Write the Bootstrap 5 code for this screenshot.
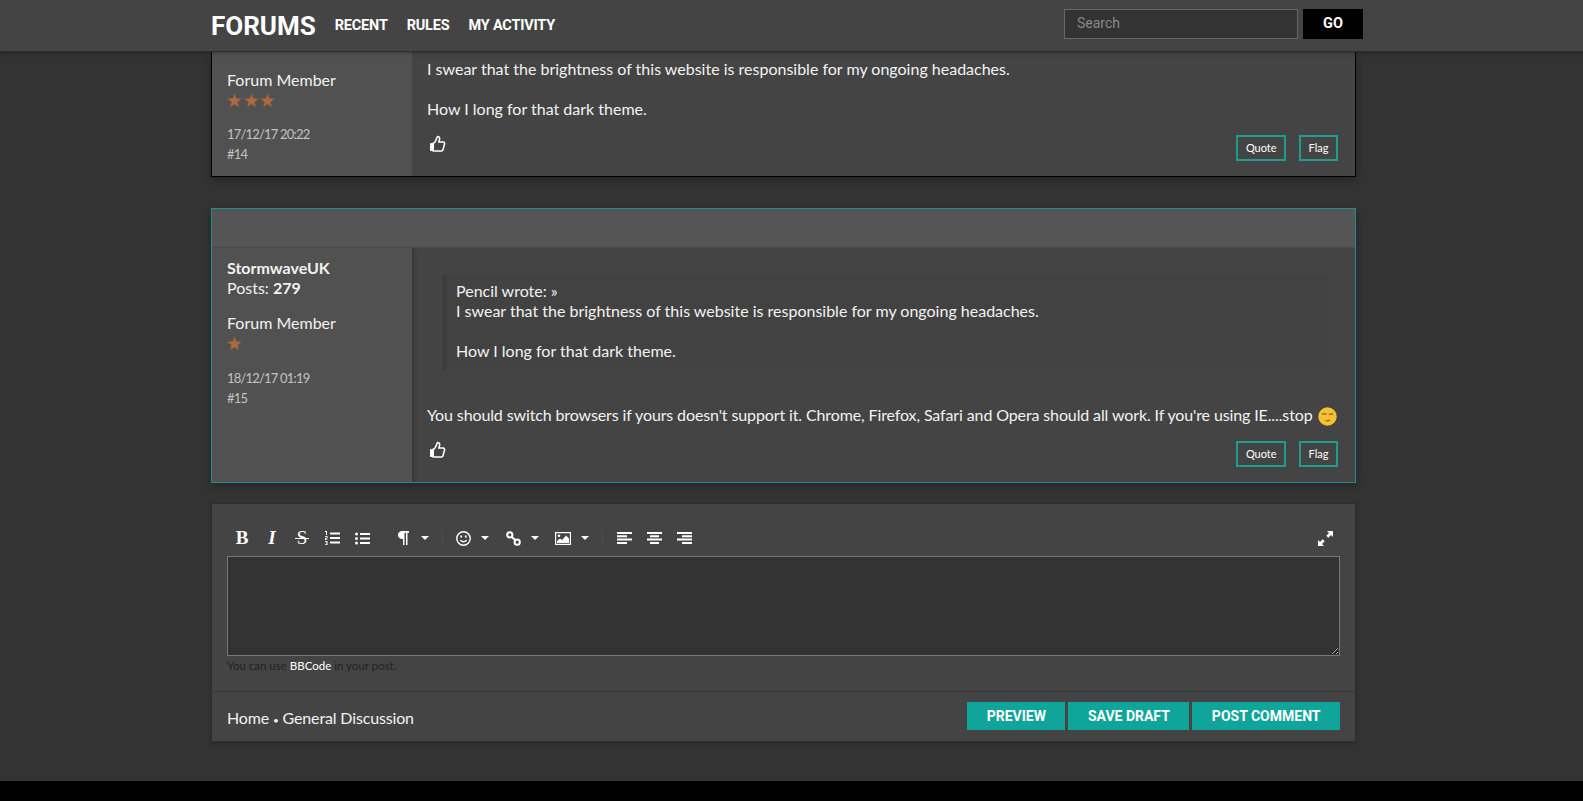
<!DOCTYPE html>
<html lang="en">
<head>
  <meta charset="UTF-8" />
  <meta name="viewport" content="width=device-width, initial-scale=1.0"/>
  <title>Forums</title>
  <link href="https://cdn.jsdelivr.net/npm/bootstrap@5.3.0/dist/css/bootstrap.min.css" rel="stylesheet"/>
  <style>
    body {
      background-color: #333;
      color: #f2f2f2;
      font-family: "Lato", "Liberation Sans", sans-serif;
      font-size: 16px;
      line-height: 20px;
      height: 100vh;
      overflow: hidden;
    }
    a { color: inherit; text-decoration: none; }
    .top-bar {
      background-color: #444;
      border-bottom: 1px solid #2b2b2b;
      box-shadow: 0 1px 4px rgba(0,0,0,.3);
      height: 52px;
      padding: 0 220px 0 211px;
      flex: none;
      position: relative;
      z-index: 5;
      font-family: "Roboto", sans-serif;
    }
    .top-brand { color: #fff; font-size: 26px; font-weight: 700; margin-right: 19px; }
    .top-link { color: #fff; font-size: 14.5px; font-weight: 700; margin: 1px 19px 0 0; letter-spacing: -.2px; }
    .top-form { align-self: flex-start; margin-top: 9px; }
    .top-search {
      background-color: #333;
      border: 1px solid #666;
      border-radius: 0;
      color: #eee;
      width: 234px;
      height: 30px;
      font-size: 14px;
      padding: 0 12px 3px;
      font-family: "Roboto", sans-serif;
    }
    .top-search::placeholder { color: #888; }
    .top-go { background: #000; color: #fff; border: 0; border-radius: 0; width: 60px; height: 30px; font-weight: 700; font-size: 14.5px; margin-left: 5px; padding: 0; }
    .page-col { padding: 0 227px 0 211px; }
    .post-box { background-color: #444; border-radius: 0; box-shadow: 0 3px 8px rgba(0,0,0,.3); }
    .post-old { border: 1px solid #000; border-top: 0; height: 125px; }
    .post-new { border: 1px solid #1d9186; margin-top: 31px; height: 275px; }
    .post-head { background-color: #555; height: 39px; border-bottom: 1px solid #4a4a4a; }
    .post-row { height: 234px; }
    .post-side { background-color: #515151; width: 200px; flex: none; padding: 10px 15px 0 15px; }
    .post-old .post-side { padding-top: 18px; }
    .post-main { padding: 8px 15px 0 15px; position: relative; flex: 1; min-width: 0; }
    .post-old .post-main { padding-top: 7px; }
    .post-new .post-main { box-shadow: inset 6px 0 5px -4px rgba(0,0,0,.2); padding-top: 27px; }
    .rank-line { margin-top: 15px; }
    .star-row { display: flex; height: 20px; align-items: center; gap: 1.5px; }
    .post-meta { color: #c2c2c2; font-size: 13px; letter-spacing: -.8px; margin-top: 14px; }
    .post-new .post-meta { margin-top: 15px; }
    .quote-block { background-color: #424242; border-left: 5px solid #3d3d3d; margin: 0 12px 0 15px; padding: 6px 9px; height: 95px; margin-bottom: 35px; }
    .tight-line { letter-spacing: -.12px; white-space: nowrap; }
    .like-btn { position: absolute; left: 17px; bottom: 24px; line-height: 0; }
    .act-row { position: absolute; right: 17px; bottom: 15px; display: flex; gap: 13px; }
    .act-btn { border: 2px solid #1f9c90; border-radius: 0; background: transparent; color: #fff; font-size: 11px; height: 26px; padding: 0 7.5px; line-height: 20px; }
    .wink { vertical-align: -5px; margin-left: 1px; }
    .editor-box { background-color: #444; border: 1px solid #2e2e2e; margin-top: 20px; height: 239px; box-shadow: 0 2px 4px rgba(0,0,0,.2); }
    .editor-top { padding: 17px 15px 0 15px; height: 188px; border-bottom: 1px solid #383838; }
    .tool-row { display: flex; align-items: center; height: 34px; margin-bottom: 1px; }
    .tool-btn { width: 30px; height: 30px; display: flex; align-items: center; justify-content: center; color: #fff; font-family: "Liberation Serif", serif; font-size: 19px; position: relative; flex: none; }
    .tool-strike::after { content: ""; position: absolute; left: 8px; right: 8px; top: 15px; height: 1px; background: #fff; }
    .tool-caret { width: 14px; height: 30px; display: flex; align-items: center; justify-content: center; flex: none; }
    .tool-caret::after { content: ""; border-left: 4px solid transparent; border-right: 4px solid transparent; border-top: 4px solid #fff; }
    .tool-sep { width: 1px; height: 16px; background: #4d4d4d; margin-left: 10px; flex: none; }
    .tool-g5 { margin-left: 5px; }
    .tool-g6 { margin-left: 6px; }
    .tool-g11 { margin-left: 11px; }
    .editor-input { display: block; width: 1113px; height: 100px; background: #333; border: 1px solid #777; color: #eee; border-radius: 0; outline: 0; margin: 0; }
    .editor-hint { color: #222; font-size: 11.5px; line-height: 14px; margin-top: 3px; }
    .editor-hint b { color: #fff; font-weight: 400; }
    .editor-foot { padding: 10px 15px 0; height: 49px; }
    .foot-crumb { margin-top: 6px; letter-spacing: -.15px; }
    .foot-dot { font-size: 10px; }
    .teal-row { gap: 3px; }
    .teal-btn { background-color: #0fa59a; color: #fff; border: 0; border-radius: 0; height: 28px; padding: 0 19.5px; font-family: "Roboto", sans-serif; font-weight: 700; font-size: 14px; line-height: 28px; }
    .page-end { background: #000; height: 20px; margin-top: auto; flex: none; }
  </style>
</head>
<body class="d-flex flex-column">
  <svg width="0" height="0" class="position-absolute">
    <symbol id="ico-star" viewBox="0 0 24 24"><path d="M12 1l3 7.6 8.2.5-6.3 5.2 2 8L12 17.900l-6.900 4.400 2-8L.8 9.100 9 8.600z" fill="#a86c43" stroke="#8a5a3c" stroke-width="1"/></symbol>
    <symbol id="ico-thumb" viewBox="0 0 24 24"><path d="M15 5.900 14 10h6a2.200 2.200 0 0 1 2 2.800l-2.300 8A2.200 2.200 0 0 1 17.500 22.500H6V11.500c1.800-.4 2.300-1.300 3-2.600L12 2a3.100 3.100 0 0 1 3 3.900Z" fill="none" stroke="#fff" stroke-width="2.200"/><rect x="1.500" y="11.500" width="5" height="11" fill="#fff"/></symbol>
  </svg>

  <nav class="navbar top-bar flex-nowrap">
    <div class="d-flex align-items-center">
      <a class="top-brand" href="#">FORUMS</a>
      <a class="top-link" href="#">RECENT</a>
      <a class="top-link" href="#">RULES</a>
      <a class="top-link" href="#">MY ACTIVITY</a>
    </div>
    <form class="d-flex top-form">
      <input class="form-control top-search" type="text" placeholder="Search">
      <button class="btn top-go" type="button">GO</button>
    </form>
  </nav>

  <div class="page-col">
    <!-- first post, scrolled under the bar -->
    <div class="post-box post-old d-flex">
      <div class="post-side">
        <div>Forum Member</div>
        <div class="star-row">
          <svg width="15" height="15"><use href="#ico-star"/></svg>
          <svg width="15" height="15"><use href="#ico-star"/></svg>
          <svg width="15" height="15"><use href="#ico-star"/></svg>
        </div>
        <div class="post-meta">17/12/17 20:22<br>#14</div>
      </div>
      <div class="post-main">
        <div>I swear that the brightness of this website is responsible for my ongoing headaches.<br><br>How I long for that dark theme.</div>
        <a class="like-btn" href="#"><svg width="17" height="17"><use href="#ico-thumb"/></svg></a>
        <div class="act-row">
          <button class="btn act-btn" type="button">Quote</button>
          <button class="btn act-btn" type="button">Flag</button>
        </div>
      </div>
    </div>

    <div class="post-box post-new">
      <div class="post-head"></div>
      <div class="d-flex post-row">
        <div class="post-side">
          <div class="fw-bold">StormwaveUK</div>
          <div>Posts: <b>279</b></div>
          <div class="rank-line">Forum Member</div>
          <div class="star-row">
            <svg width="15" height="15"><use href="#ico-star"/></svg>
          </div>
          <div class="post-meta">18/12/17 01:19<br>#15</div>
        </div>
        <div class="post-main">
          <div class="quote-block">Pencil wrote: »<br>I swear that the brightness of this website is responsible for my ongoing headaches.<br><br>How I long for that dark theme.</div>
          <div class="tight-line">You should switch browsers if yours doesn't support it. Chrome, Firefox, Safari and Opera should all work. If you're using IE....stop
            <svg class="wink" width="19" height="19" viewBox="0 0 19 19"><circle cx="9.500" cy="9.500" r="9.200" fill="#f5c332"/><path d="M4 7.500q2.200-1.600 4.500 0M11 7.800q2-1.500 4.200-.3" stroke="#8a6420" stroke-width="1.200" fill="none"/><path d="M7.500 13.500q2.500 1 4.500-.5" stroke="#a0552a" stroke-width="1.200" fill="none"/></svg>
          </div>
          <a class="like-btn" href="#"><svg width="17" height="17"><use href="#ico-thumb"/></svg></a>
          <div class="act-row">
            <button class="btn act-btn" type="button">Quote</button>
            <button class="btn act-btn" type="button">Flag</button>
          </div>
        </div>
      </div>
    </div>

    <div class="editor-box">
      <div class="editor-top">
        <div class="tool-row">
          <span class="tool-btn fw-bold">B</span>
          <span class="tool-btn fw-bold fst-italic">I</span>
          <span class="tool-btn tool-strike">S</span>
          <span class="tool-btn"><svg width="15" height="14" viewBox="0 0 15 14" fill="#fff"><path d="M5 1.500h10v2H5zM5 6h10v2H5zM5 10.500h10v2H5z"/><path d="M0 0h2v4H1V1H0zM0 5h2.500v2.500H1v1h1.500v.6H0V7h1.500V5.700H0zM0 10h2.500v4H0v-.7h1.500v-1H.5v-.6h1v-1H0z"/></svg></span>
          <span class="tool-btn"><svg width="15" height="13" viewBox="0 0 15 13" fill="#fff"><circle cx="1.500" cy="2" r="1.500"/><circle cx="1.500" cy="6.500" r="1.500"/><circle cx="1.500" cy="11" r="1.500"/><path d="M5 1h10v2H5zM5 5.500h10v2H5zM5 10h10v2H5z"/></svg></span>
          <span class="tool-btn tool-g11"><svg width="11" height="14" viewBox="0 0 11 14" fill="#fff"><path d="M5 0h6v1.800H9.500V14H8V1.800H6.500V14H5V8C1.500 8 0 6 0 4s1.500-4 5-4z"/></svg></span>
          <span class="tool-caret"></span>
          <span class="tool-sep"></span>
          <span class="tool-btn tool-g5"><svg width="15" height="15" viewBox="0 0 15 15" fill="none" stroke="#fff" stroke-width="1.400"><circle cx="7.500" cy="7.500" r="6.700"/><path d="M4.300 9.300q3.200 3 6.400 0"/><path d="M5.200 4.500v2M9.800 4.500v2" stroke-width="1.800"/></svg></span>
          <span class="tool-caret"></span>
          <span class="tool-btn tool-g6"><svg width="15" height="15" viewBox="0 0 15 15" fill="none" stroke="#fff" stroke-width="2"><circle cx="3.800" cy="3.800" r="2.600"/><circle cx="11.200" cy="11.200" r="2.600"/><path d="M5.500 5.500l4 4"/></svg></span>
          <span class="tool-caret"></span>
          <span class="tool-btn tool-g6"><svg width="16" height="13" viewBox="0 0 16 13"><rect x=".6" y=".6" width="14.800" height="11.800" fill="none" stroke="#fff" stroke-width="1.200"/><circle cx="4" cy="3.800" r="1.300" fill="#fff"/><path d="M2 11V9l3-2.500 2 1.500 4-4.500 3 3V11z" fill="#fff"/></svg></span>
          <span class="tool-caret"></span>
          <span class="tool-sep"></span>
          <span class="tool-btn tool-g6"><svg width="15" height="12" viewBox="0 0 15 12" fill="#fff"><path d="M0 0h15v2H0zM0 3.300h10v2H0zM0 6.600h15v2H0zM0 9.900h10v2H0z"/></svg></span>
          <span class="tool-btn"><svg width="15" height="12" viewBox="0 0 15 12" fill="#fff"><path d="M0 0h15v2H0zM3 3.300h9v2H3zM0 6.600h15v2H0zM3 9.900h9v2H3z"/></svg></span>
          <span class="tool-btn"><svg width="15" height="12" viewBox="0 0 15 12" fill="#fff"><path d="M0 0h15v2H0zM5 3.300h10v2H5zM0 6.600h15v2H0zM5 9.900h10v2H5z"/></svg></span>
          <span class="tool-btn ms-auto"><svg width="15" height="15" viewBox="0 0 15 15" fill="#fff"><path d="M9 0h6v6l-2-2-2.700 2.700-2-2L11 2zM0 15V9l2 2 2.700-2.700 2 2L4 13l2 2z"/></svg></span>
        </div>
        <textarea class="editor-input"></textarea>
        <div class="editor-hint">You can use <b>BBCode</b> in your post.</div>
      </div>
      <div class="editor-foot d-flex justify-content-between align-items-start">
        <div class="foot-crumb">Home <span class="foot-dot">•</span> General Discussion</div>
        <div class="d-flex teal-row">
          <button class="btn teal-btn" type="button">PREVIEW</button>
          <button class="btn teal-btn" type="button">SAVE DRAFT</button>
          <button class="btn teal-btn" type="button">POST COMMENT</button>
        </div>
      </div>
    </div>
  </div>

  <div class="page-end"></div>
  <script src="https://cdn.jsdelivr.net/npm/bootstrap@5.3.0/dist/js/bootstrap.bundle.min.js"></script>
</body>
</html>
